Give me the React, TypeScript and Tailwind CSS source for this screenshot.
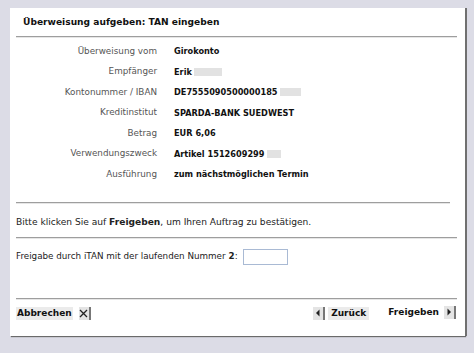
import React from "react";

const rows: { label: string; value: string; blur?: number }[] = [
  { label: "Überweisung vom", value: "Girokonto" },
  { label: "Empfänger", value: "Erik", blur: 28 },
  { label: "Kontonummer / IBAN", value: "DE7555090500000185", blur: 21 },
  { label: "Kreditinstitut", value: "SPARDA-BANK SUEDWEST" },
  { label: "Betrag", value: "EUR 6,06" },
  { label: "Verwendungszweck", value: "Artikel 1512609299", blur: 14 },
  { label: "Ausführung", value: "zum nächstmöglichen Termin" },
];

function Rule() {
  return <div className="ml-[6px] mr-[8px] h-[2px] border-t border-[#9e9e9e] bg-[#e6e6e6]" />;
}

function ArrowBox({ dir }: { dir: "left" | "right" | "x" }) {
  return (
    <span className="inline-flex h-[13px] w-[12px] items-center justify-center border-r-2 border-[#777] bg-[#e4e4e4]">
      {dir === "x" ? (
        <svg width="9" height="9" viewBox="0 0 9 9">
          <path d="M1 1L8 8M8 1L1 8" stroke="#222" strokeWidth="1.3" />
        </svg>
      ) : (
        <svg width="6" height="8" viewBox="0 0 6 8">
          {dir === "left" ? <path d="M4.5 0.5L1 4L4.5 7.5Z" fill="#222" /> : <path d="M1.5 0.5L5 4L1.5 7.5Z" fill="#222" />}
        </svg>
      )}
    </span>
  );
}

export default function App() {
  return (
    <div className="h-[353px] w-[474px] bg-[#dcdce6] pl-[10px] pt-[8px] font-['DejaVu_Sans',Verdana,sans-serif] text-[#111]">
      <div className="h-[328px] w-[457px] border-r-2 border-[#707070] bg-white shadow-[0_2px_1px_-1px_#6a6a6a]">
        <div className="flex h-[28px] items-center pl-[13px] pt-[1px] text-[9.1px] font-bold">
          Überweisung aufgeben: TAN eingeben
        </div>
        <Rule />
        <div className="pt-[3px]">
          {rows.map((r) => (
            <div key={r.label} className="flex h-[20.5px] items-center">
              <div className="w-[148px] pr-[1px] text-right text-[8.8px] text-[#555]">{r.label}</div>
              <div className="ml-[16px] flex items-center text-[8.2px] font-bold">
                {r.value}
                {r.blur ? <span className="ml-[2px] inline-block h-[8px] bg-[#e2e2e2]" style={{ width: r.blur }} /> : null}
              </div>
            </div>
          ))}
        </div>
        <div className="mt-[17.5px]" />
        <div className="mr-[7px]">
          <Rule />
        </div>
        <div className="flex h-[33px] items-center pl-[6px] pt-[4px] text-[9.1px] text-[#222]">
          <span>
            Bitte klicken Sie auf <b>Freigeben</b>, um Ihren Auftrag zu bestätigen.
          </span>
        </div>
        <Rule />
        <div className="flex h-[36px] items-center pl-[6px] text-[8.75px] text-[#222]">
          Freigabe durch iTAN mit der laufenden Nummer <b className="ml-[3px]">2</b>:
          <span className="ml-[5px] inline-block h-[16px] w-[45px] border border-[#a9bad4] bg-white" />
        </div>
        <div className="mt-[23px]" />
        <Rule />
        <div className="flex h-[26px] items-center justify-between pl-[6px] pr-[9px] text-[9px] font-bold">
          <div className="flex items-center gap-[6px]">
            <span className="bg-[#ebebeb] px-[1px] leading-[13px]">Abbrechen</span>
            <ArrowBox dir="x" />
          </div>
          <div className="flex items-center">
            <ArrowBox dir="left" />
            <span className="ml-[3px] bg-[#ebebeb] px-[3px] leading-[13px]">Zurück</span>
            <span className="ml-[19px]">Freigeben</span>
            <span className="ml-[5px]">
              <ArrowBox dir="right" />
            </span>
          </div>
        </div>
      </div>
    </div>
  );
}
